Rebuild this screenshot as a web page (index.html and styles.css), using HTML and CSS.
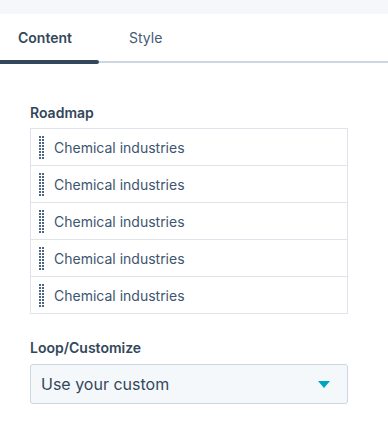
FILE: index.html
```html
<!DOCTYPE html>
<html lang="en">
<head>
    <meta charset="UTF-8">
    <meta name="viewport" content="width=device-width, initial-scale=1.0">
    <title>Roadmap module</title>
    <link rel="stylesheet" href="styles.css">
</head>
<body>
    <!-- Faixa superior -->
    <div class="top-strip"></div>

    <!-- Abas -->
    <div class="tabs">
        <div class="tab active">Content</div>
        <div class="tab">Style</div>
    </div>

    <div class="panel">
        <div class="field-label">Roadmap</div>
        <ul class="sort-list">
            <li class="sort-row"><span class="handle"></span>Chemical industries</li>
            <li class="sort-row"><span class="handle"></span>Chemical industries</li>
            <li class="sort-row"><span class="handle"></span>Chemical industries</li>
            <li class="sort-row"><span class="handle"></span>Chemical industries</li>
            <li class="sort-row"><span class="handle"></span>Chemical industries</li>
        </ul>

        <div class="field-label loop-label">Loop/Customize</div>
        <div class="select">
            <span>Use your custom</span>
            <svg class="caret" width="12" height="7" viewBox="0 0 12 7"><path d="M0 0h12L6 7z" fill="#00a4bd"/></svg>
        </div>
    </div>
</body>
</html>
```

FILE: styles.css
```css
/* Estilo geral */
body {
    font-family: Inter, "Noto Sans", sans-serif;
    margin: 0;
    padding: 0;
    color: #33475b;
    background: #fff;
}

.top-strip {
    height: 14px;
    background-color: #f5f8fa;
}

/* Abas */
.tabs {
    display: flex;
    height: 47px;
    border-bottom: 2px solid #cbd6e2;
}

.tab {
    position: relative;
    display: flex;
    align-items: center;
    font-size: 14px;
    color: #425b76;
}

.tab:first-child {
    width: 81px;
    padding-left: 18px;
}

.tab:last-child {
    padding-left: 30px;
}

.tab.active {
    font-weight: 600;
    color: #33475b;
}

.tab.active::after {
    content: "";
    position: absolute;
    left: 0;
    right: 0;
    bottom: -3px;
    height: 4px;
    background-color: #33475b;
    border-radius: 0 2px 2px 0;
}

/* Painel */
.panel {
    padding: 41px 40px 0 30px;
}

.field-label {
    font-size: 14px;
    font-weight: 600;
    line-height: 18px;
    margin-bottom: 6px;
}

.loop-label {
    margin-top: 25px;
    margin-bottom: 7px;
}

.sort-list {
    list-style: none;
    margin: 0;
    padding: 0;
    border: 1px solid #dfe3eb;
}

.sort-row {
    display: flex;
    align-items: center;
    height: 36px;
    font-size: 14px;
    color: #3d5570;
    border-top: 1px solid #dfe3eb;
}

.sort-row:first-child {
    border-top: none;
}

/* Alça de arrastar */
.handle {
    width: 5px;
    height: 23px;
    margin: 0 10px 0 8px;
    background-image: radial-gradient(circle at 1px 1px, #4b6582 1.1px, transparent 1.3px);
    background-size: 3px 3px;
}

/* Select */
.select {
    display: flex;
    align-items: center;
    justify-content: space-between;
    height: 38px;
    padding: 0 17px 0 10px;
    background-color: #f5f8fa;
    border: 1px solid #cbd6e2;
    border-radius: 3px;
    font-size: 16px;
    color: #33475b;
}

.caret {
    display: block;
}
```
